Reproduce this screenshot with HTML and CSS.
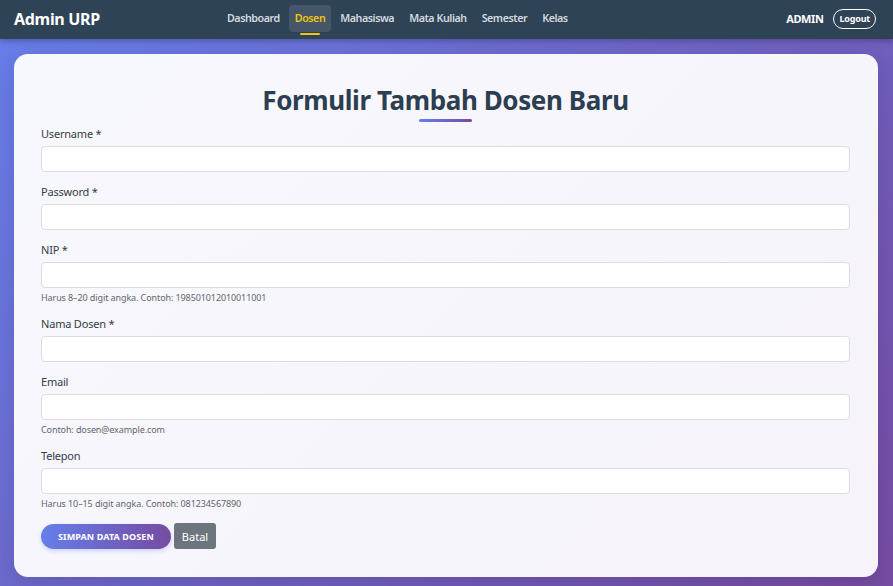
FILE: index.html
```html
<!DOCTYPE html>
<html lang="id">
<head>
<meta charset="utf-8">
<title>Admin URP - Tambah Dosen</title>
<link rel="stylesheet" href="styles.css">
</head>
<body>
<nav class="navbar">
  <div class="brand">Admin URP</div>
  <ul class="nav-links">
    <li><a href="#" class="nav-link">Dashboard</a></li>
    <li><a href="#" class="nav-link active">Dosen</a></li>
    <li><a href="#" class="nav-link">Mahasiswa</a></li>
    <li><a href="#" class="nav-link">Mata Kuliah</a></li>
    <li><a href="#" class="nav-link">Semester</a></li>
    <li><a href="#" class="nav-link">Kelas</a></li>
  </ul>
  <div class="user-area">
    <span class="user-name">ADMIN</span>
    <a href="#" class="logout">Logout</a>
  </div>
</nav>
<main class="card">
  <h1 class="title">Formulir Tambah Dosen Baru</h1>
  <div class="title-bar"></div>
  <form class="form">
    <div class="group">
      <label class="label">Username *</label>
      <input class="input" type="text">
    </div>
    <div class="group">
      <label class="label">Password *</label>
      <input class="input" type="password">
    </div>
    <div class="group">
      <label class="label">NIP *</label>
      <input class="input" type="text">
      <small class="hint">Harus 8–20 digit angka. Contoh: 198501012010011001</small>
    </div>
    <div class="group">
      <label class="label">Nama Dosen *</label>
      <input class="input" type="text">
    </div>
    <div class="group">
      <label class="label">Email</label>
      <input class="input" type="email">
      <small class="hint">Contoh: dosen@example.com</small>
    </div>
    <div class="group">
      <label class="label">Telepon</label>
      <input class="input" type="text">
      <small class="hint">Harus 10–15 digit angka. Contoh: 081234567890</small>
    </div>
    <div class="actions">
      <button type="button" class="btn-primary">Simpan Data Dosen</button>
      <button type="button" class="btn-secondary">Batal</button>
    </div>
  </form>
</main>
</body>
</html>
```
FILE: styles.css
```css
* { box-sizing: border-box; }
html, body { margin: 0; padding: 0; }
body {
  font-family: "Noto Sans", "Open Sans", sans-serif;
  background: linear-gradient(135deg, #667eea 0%, #764ba2 100%);
  min-height: 586px;
  color: #2c3e50;
  overflow: hidden;
}
.navbar {
  height: 39px;
  background: #2f4356;
  display: flex;
  align-items: center;
  padding: 0 17px 0 14px;
  box-shadow: 0 2px 6px rgba(0,0,0,0.25);
}
.brand {
  color: #fff;
  font-weight: 700;
  font-size: 16px;
  width: 207px;
  letter-spacing: -0.3px;
  margin-top: -1px;
}
.nav-links {
  list-style: none;
  display: flex;
  gap: 3px;
  margin: 0;
  padding: 0;
  flex: 1;
  align-items: center;
  margin-top: -2px;
}
.nav-link {
  display: block;
  position: relative;
  color: #d3d8de;
  text-decoration: none;
  font-size: 10.7px;
  font-weight: 600;
  padding: 7px 6px 7px 6px;
  line-height: 13px;
  border-radius: 4px;
  letter-spacing: -0.45px;
}
.nav-link.active {
  color: #f1c40f;
  background: rgba(255,255,255,0.1);
}
.nav-link.active::after {
  content: "";
  position: absolute;
  left: 50%;
  bottom: -3px;
  width: 20px;
  margin-left: -10px;
  height: 2px;
  border-radius: 1px;
  background: #f1c40f;
}
.user-area {
  display: flex;
  align-items: center;
  gap: 10px;
  margin-top: -2px;
}
.user-name {
  color: #fff;
  font-weight: 700;
  font-size: 11px;
  letter-spacing: -0.4px;
}
.logout {
  color: #fff;
  text-decoration: none;
  font-size: 9px;
  font-weight: 700;
  border: 1px solid #fff;
  border-radius: 11px;
  padding: 3px 5px;
  line-height: 12px;
  letter-spacing: -0.2px;
}
.card {
  margin: 15px 15px 10px 14px;
  background: linear-gradient(135deg, #f7f8fd 0%, #f6f3fa 100%);
  border-radius: 14px;
  padding: 28px 28px 28px 27px;
  box-shadow: 0 6px 20px rgba(0,0,0,0.12);
}
.title {
  margin: 0;
  text-align: center;
  font-size: 26px;
  line-height: 36px;
  font-weight: 700;
  color: #2c3e50;
  letter-spacing: -0.4px;
}
.title-bar {
  width: 53px;
  height: 3px;
  margin: 1px auto 4px;
  border-radius: 2px;
  background: linear-gradient(90deg, #667eea, #764ba2);
}
.form { display: flex; flex-direction: column; }
.group { display: flex; flex-direction: column; margin-bottom: 12px; }
.label {
  font-size: 11px;
  line-height: 16px;
  margin-bottom: 4px;
  color: #333c45;
  letter-spacing: -0.2px;
}
.input {
  height: 26px;
  border: 1px solid #dcdce6;
  border-radius: 4px;
  background: #fff;
  font: inherit;
  padding: 0 8px;
  outline: none;
}
.hint {
  margin-top: 3px;
  font-size: 9px;
  line-height: 13px;
  color: #5f666d;
  letter-spacing: -0.1px;
}
.actions { display: flex; gap: 3px; align-items: center; margin-top: 1px; }
.btn-primary {
  height: 25px;
  border: none;
  border-radius: 13px;
  background: linear-gradient(90deg, #667eea, #764ba2);
  color: #fff;
  font: inherit;
  font-size: 9px;
  font-weight: 700;
  text-transform: uppercase;
  padding: 0 17px;
  letter-spacing: 0.1px;
  box-shadow: 0 2px 4px rgba(102,126,234,0.3);
}
.btn-secondary {
  height: 26px;
  border: none;
  border-radius: 3px;
  background: #6c757d;
  color: #fff;
  font: inherit;
  font-size: 11px;
  padding: 0 8px;
}
```
